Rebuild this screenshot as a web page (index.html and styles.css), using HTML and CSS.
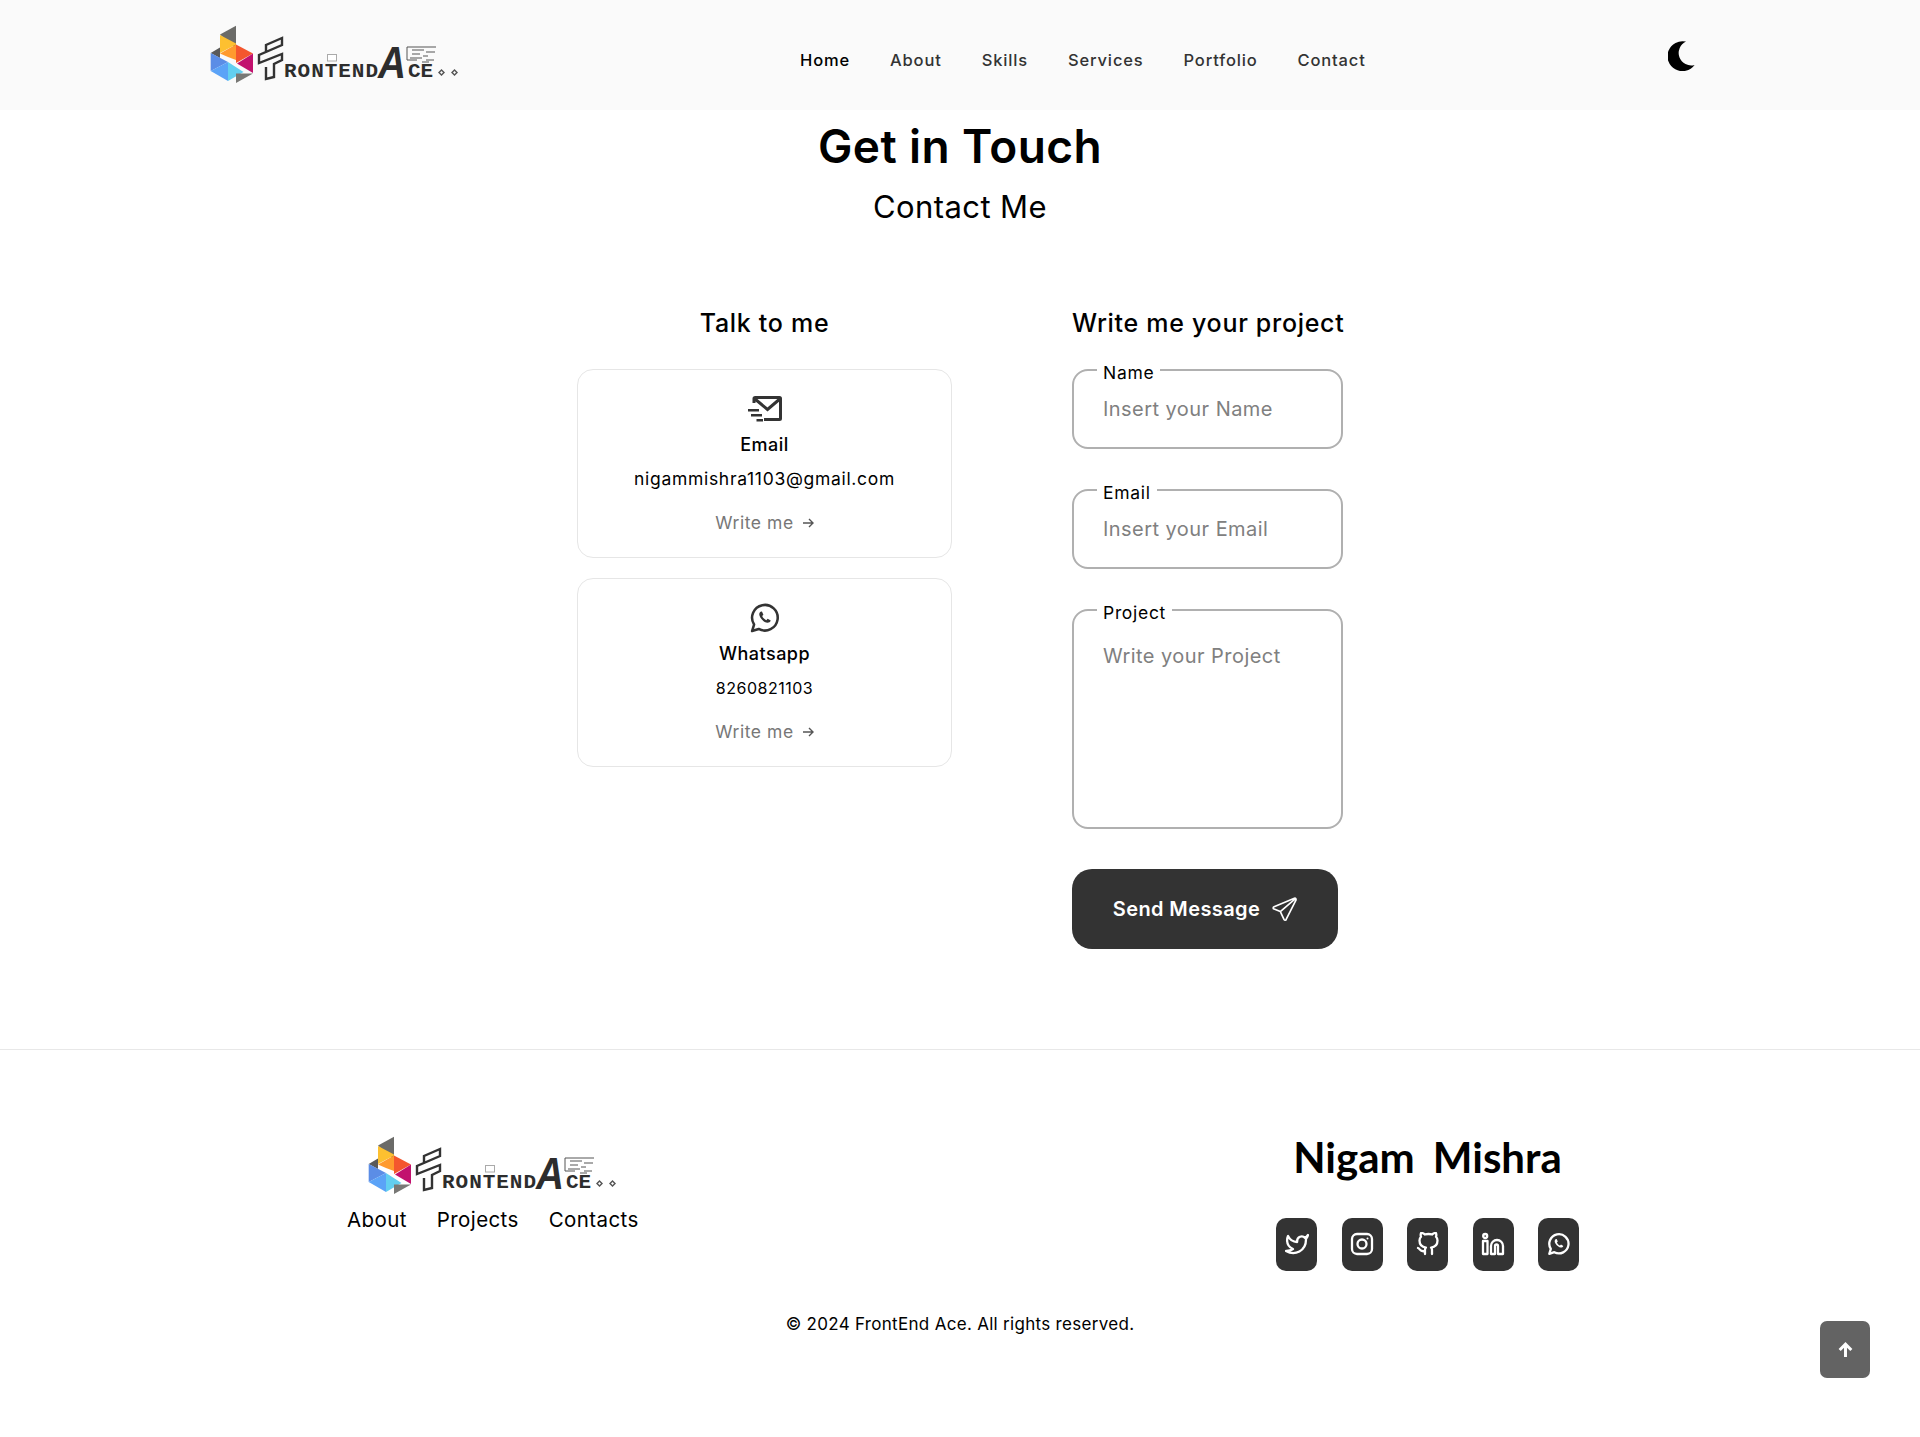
FILE: index.html
```html
<!DOCTYPE html>
<html lang="en">
<head>
<meta charset="utf-8">
<title>Contact Me</title>
<link rel="stylesheet" href="styles.css">
</head>
<body>
<svg class="defs" width="0" height="0" aria-hidden="true">
  <defs>
    <symbol id="logo" viewBox="15 12 260 66">
      <polygon points="30,24.500 46,15.700 46,39" fill="#6b6b68"/>
      <polygon points="30,25 46,33.500 46,34.500 30,43" fill="#fdc030"/>
      <polygon points="30,43.500 46,34.500 46,50 38,47" fill="#ff9a2e"/>
      <polygon points="46,34.500 63,43.500 46,53" fill="#f4562e"/>
      <polygon points="63,43.500 63,63 47,53.500" fill="#c2116e"/>
      <polygon points="20.700,43 30,37.500 30,48" fill="#5a5a5a"/>
      <polygon points="20.700,43 38,52 20.700,61" fill="#5b8de6"/>
      <polygon points="20.700,61 38,52 38,71" fill="#5ba3f7"/>
      <polygon points="38,52 53.500,62 38,71" fill="#62cff0"/>
      <polygon points="46,73 63,63.500 46,63.500" fill="#787875"/>
      <path class="logo-mark" d="M76 42V35L92 28V35L69 45V53L92 44V50L84 54V67L76 69V57"/>
      <rect class="logo-laptop" x="137.500" y="44.500" width="9" height="6.500"/>
      <text class="logo-word" x="94" y="67" textLength="94" lengthAdjust="spacing">RONTEND</text>
      <text class="logo-a" x="188" y="68.300" textLength="28" lengthAdjust="spacingAndGlyphs">A</text>
      <text class="logo-word" x="218" y="67" textLength="25" lengthAdjust="spacing">CE</text>
      <g class="logo-code">
        <path d="M217 37h29M217 37v13h10M222 40h12M236 42h9M222 44h8M233 46h5M220 48h12M236 50h8M232 52h7"/>
      </g>
      <path class="logo-dots" d="M248 62.500l3.500-3.500 3.500 3.500-3.500 3.500zM250 62.500l1.500 1.500 1.500-1.500-1.500-1.500zM261 62.500l3.500-3.500 3.500 3.500-3.500 3.500zM263 62.500l1.500 1.500 1.500-1.500-1.500-1.500z"/>
    </symbol>
  </defs>
</svg>

<header class="header">
  <a class="logo" href="#"><svg class="logo-svg" aria-label="FrontEnd Ace"><use href="#logo"/></svg></a>
  <nav class="nav">
    <a class="nav-link nav-active" href="#">Home</a>
    <a class="nav-link" href="#">About</a>
    <a class="nav-link" href="#">Skills</a>
    <a class="nav-link" href="#">Services</a>
    <a class="nav-link" href="#">Portfolio</a>
    <a class="nav-link" href="#">Contact</a>
  </nav>
  <svg class="moon" viewBox="0 0 27 30" aria-label="Dark mode"><path d="M18 .6A15 15 0 1 0 26.600 24A12.500 12.500 0 0 1 18 .6Z"/></svg>
</header>

<main class="contact">
  <h1 class="title">Get in Touch</h1>
  <p class="subtitle">Contact Me</p>
  <div class="columns">
    <section class="talk">
      <h2 class="col-title">Talk to me</h2>
      <div class="cards">
        <article class="card">
          <svg class="card-icon" width="34" height="26" viewBox="0 0 34 26" fill="none"><path d="M6 7V2.500C6 1.800 6.500 1.500 7.200 1.500H31.500C32.200 1.500 32.500 1.800 32.500 2.500V22.500C32.500 23.200 32.200 23.500 31.500 23.500H16M7 3L19.500 13.500 31.800 3" stroke="#333" stroke-width="3"/><path d="M0 14.300H11M3 19.300H14M8.500 24.300H15" stroke="#333" stroke-width="2.600"/></svg>
          <h3 class="card-title">Email</h3>
          <p class="card-value card-mail">nigammishra1103@gmail.com</p>
          <a class="card-link" href="#">Write me <svg class="arrow" viewBox="0 0 12 12" fill="none"><path d="M1 6h10M7 2l4 4-4 4"/></svg></a>
        </article>
        <article class="card">
          <svg class="card-icon" width="32" height="32" viewBox="0 0 24 24" fill="none"><path d="M2.300 21.800l1.500-4.900a9.600 9.600 0 1 1 3.500 3.300z" stroke="#333" stroke-width="1.900" stroke-linejoin="round"/><path d="M8.400 7.500c-1 1-1 2.400.2 4.300 1.300 2 3.500 3.700 5.200 3.800 1.200 0 2.200-.7 2.500-1.700l-2.300-1.300-1 1c-1.100-.3-2.600-1.700-3.100-3.100l.9-1-1-2.200c-.5-.3-1-.3-1.400.2z" fill="#333"/></svg>
          <h3 class="card-title">Whatsapp</h3>
          <p class="card-value">8260821103</p>
          <a class="card-link" href="#">Write me <svg class="arrow" viewBox="0 0 12 12" fill="none"><path d="M1 6h10M7 2l4 4-4 4"/></svg></a>
        </article>
      </div>
    </section>
    <section class="write">
      <h2 class="col-title">Write me your project</h2>
      <form class="form">
        <div class="field">
          <label class="field-label" for="name">Name</label>
          <input class="field-input" id="name" type="text" placeholder="Insert your Name">
        </div>
        <div class="field">
          <label class="field-label" for="email">Email</label>
          <input class="field-input" id="email" type="email" placeholder="Insert your Email">
        </div>
        <div class="field field-tall">
          <label class="field-label" for="project">Project</label>
          <textarea class="field-input field-area" id="project" placeholder="Write your Project"></textarea>
        </div>
        <button class="send" type="button">Send Message
          <svg class="send-icon" viewBox="0 0 24 24" fill="none"><path d="M21.500 1.200L2 9.300c-1.200.5-1.200 1.800 0 2.300L8 14l3.500 7.500c.6 1.200 1.900 1 2.200-.2L23 3c.3-1.300-.4-2.200-1.500-1.800zM8 14L22.500 1.600"/></svg>
        </button>
      </form>
    </section>
  </div>
</main>

<footer class="footer">
  <div class="footer-row">
    <div class="footer-brand">
      <svg class="logo-svg" aria-label="FrontEnd Ace"><use href="#logo"/></svg>
      <ul class="footer-links">
        <li><a class="footer-link" href="#">About</a></li>
        <li><a class="footer-link" href="#">Projects</a></li>
        <li><a class="footer-link" href="#">Contacts</a></li>
      </ul>
    </div>
    <div class="footer-social">
      <div class="signature">Nigam Mishra</div>
      <div class="socials">
        <a class="social" href="#"><svg class="social-icon" viewBox="0 0 24 24"><path d="M23 3a10.900 10.900 0 0 1-3 3 4.480 4.480 0 0 0-7.860 3v1A10.660 10.660 0 0 1 3 4s-4 9 5 13a11.640 11.640 0 0 1-7 2c9 5 20 0 20-11.500a4.500 4.500 0 0 0-.08-.83A7.720 7.720 0 0 0 23 3z"/></svg></a>
        <a class="social" href="#"><svg class="social-icon" viewBox="0 0 24 24"><rect x="2" y="2" width="20" height="20" rx="5"/><circle cx="12" cy="12" r="4.500"/><circle class="social-dot" cx="17.500" cy="6.500" r="1"/></svg></a>
        <a class="social" href="#"><svg class="social-icon" viewBox="0 0 24 24"><path d="M9 19c-5 1.500-5-2.500-7-3m14 6v-3.870a3.370 3.370 0 0 0-.94-2.610c3.140-.35 6.440-1.540 6.440-7A5.440 5.440 0 0 0 20 4.770 5.070 5.070 0 0 0 19.910 1S18.730.65 16 2.480a13.380 13.380 0 0 0-7 0C6.270.65 5.090 1 5.090 1A5.070 5.070 0 0 0 5 4.770a5.440 5.440 0 0 0-1.500 3.750c0 5.420 3.300 6.610 6.440 7A3.370 3.370 0 0 0 9 18.130V22"/></svg></a>
        <a class="social" href="#"><svg class="social-icon" viewBox="0 0 24 24"><path d="M16 8a6 6 0 0 1 6 6v8h-5v-8a1.500 1.500 0 0 0-3 0v8h-4v-8a6 6 0 0 1 6-6z"/><rect x="2" y="9" width="4.500" height="13"/><circle cx="4.200" cy="4" r="2"/></svg></a>
        <a class="social" href="#"><svg class="social-icon" viewBox="0 0 24 24"><path d="M2.300 21.800l1.500-4.900a9.600 9.600 0 1 1 3.500 3.300z"/><path class="social-fill" d="M8.400 7.500c-1 1-1 2.400.2 4.300 1.300 2 3.500 3.700 5.200 3.800 1.200 0 2.200-.7 2.500-1.700l-2.300-1.300-1 1c-1.100-.3-2.600-1.700-3.100-3.100l.9-1-1-2.200c-.5-.3-1-.3-1.400.2z"/></svg></a>
      </div>
    </div>
  </div>
  <p class="copyright">© 2024 FrontEnd Ace. All rights reserved.</p>
</footer>

<a class="scroll-top" href="#"><svg class="scroll-icon" viewBox="0 0 16 16"><path d="M8 15V3M2.500 8.500L8 3l5.500 5.500"/></svg></a>
</body>
</html>
```
FILE: styles.css
```css
* { box-sizing: border-box; }
html, body { margin: 0; padding: 0; }
body {
  background: #fff;
  color: #000;
  font-family: Inter, "Open Sans", sans-serif;
  font-size: 16px;
  min-height: 1437px;
}
a { color: inherit; text-decoration: none; }
.defs { position: absolute; }

.logo-svg { display: block; width: 260px; height: 66px; }
.logo-mark { fill: none; stroke: #333; stroke-width: 2.4; }
.logo-laptop { fill: #fff; stroke: #aaa; stroke-width: 1; }
.logo-word { font-family: "Liberation Mono", monospace; font-weight: 700; font-size: 21px; fill: #2d2d2d; }
.logo-a { font-family: "Liberation Sans", sans-serif; font-weight: 700; font-style: italic; font-size: 45px; fill: #2d2d2d; }
.logo-code { fill: none; stroke: #555; stroke-width: 1; }
.logo-dots { fill: #555; fill-rule: evenodd; }

.header {
  display: grid;
  grid-template-columns: 595px auto 1fr;
  align-items: center;
  height: 110px;
  padding: 0 225px 0 205px;
  background: #fafafa;
}
.nav { display: flex; gap: 40px; padding-top: 10px; }
.nav-link { color: #333; font-weight: 500; font-size: 16.5px; line-height: 24px; letter-spacing: .85px; }
.nav-active { color: #000; }
.moon { justify-self: end; width: 27px; height: 30px; fill: #000; margin-top: 2px; }

.contact { display: flex; flex-direction: column; align-items: center; }
.title { margin: 0; font-size: 46px; line-height: 72px; font-weight: 600; letter-spacing: .4px; }
.subtitle { margin: 0; font-size: 31px; line-height: 48px; padding-top: 1px; letter-spacing: .4px; }
.columns { display: grid; grid-template-columns: 375px 271px; gap: 120px; margin-top: 73px; }
.col-title { margin: 0 0 26px; font-size: 25px; line-height: 39px; font-weight: 500; letter-spacing: .7px; white-space: nowrap; }
.talk .col-title { text-align: center; }

.cards { display: flex; flex-direction: column; gap: 20px; }
.card {
  display: flex;
  flex-direction: column;
  align-items: center;
  padding: 23px 0 22px;
  border: 1px solid #e6e6e6;
  border-radius: 16px;
}
.card-icon { display: block; height: 32px; }
.card-title { margin: 8px 0 0; font-size: 18px; line-height: 24px; font-weight: 500; letter-spacing: .5px; }
.card-value { margin: 10px 0 0; font-size: 16px; line-height: 24px; letter-spacing: .5px; }
.card-mail { font-size: 17.5px; letter-spacing: .7px; }
.card-link { display: flex; align-items: center; gap: 8px; margin-top: 20px; color: #777; font-size: 17.5px; line-height: 24px; letter-spacing: .55px; }
.arrow { width: 12px; height: 12px; stroke: #555; stroke-width: 1.4; }

.form { display: flex; flex-direction: column; gap: 40px; }
.field { position: relative; height: 80px; }
.field-tall { height: 220px; }
.field-label {
  position: absolute;
  top: -5px;
  left: 25px;
  padding: 0 6px;
  background: #fff;
  font-size: 17.5px;
  line-height: 18px;
  letter-spacing: .7px;
}
.field-input {
  display: block;
  width: 100%;
  height: 100%;
  padding: 0 29px;
  border: 2px solid #b0b0b0;
  border-radius: 16px;
  background: #fff;
  color: #000;
  font-family: inherit;
  font-size: 20px;
  letter-spacing: .45px;
  outline: none;
  resize: none;
}
.field-area { padding-top: 33px; }
.field-input::placeholder { color: #808080; opacity: 1; }

.send {
  display: flex;
  align-items: center;
  justify-content: center;
  gap: 12px;
  width: 266px;
  height: 80px;
  border: 0;
  border-radius: 20px;
  background: #333;
  color: #fff;
  font-family: inherit;
  font-size: 20px;
  font-weight: 600;
  letter-spacing: .4px;
}
.send-icon { width: 25px; height: 25px; stroke: #fff; stroke-width: 1.6; stroke-linejoin: round; }

.footer { margin-top: 100px; border-top: 1px solid #e8e8e8; }
.footer-row { display: flex; justify-content: space-between; padding: 83px 341px 0 347px; }
.footer-brand { display: flex; flex-direction: column; align-items: center; }
.footer-links { display: flex; gap: 30px; margin: 9px 0 0; padding: 0; list-style: none; }
.footer-link { font-size: 20.5px; line-height: 24px; display: block; letter-spacing: .4px; }
.footer-social { display: flex; flex-direction: column; align-items: center; }
.signature {
  font-family: Lato, sans-serif;
  font-size: 42px;
  font-weight: 700;
  line-height: 48px;
  word-spacing: 8px;
}
.socials { display: flex; gap: 24.5px; margin-top: 37px; }
.social {
  display: flex;
  align-items: center;
  justify-content: center;
  width: 41px;
  height: 53px;
  padding-bottom: 2px;
  border-radius: 10px;
  background: #333;
}
.social-icon { width: 24px; height: 24px; fill: none; stroke: #fff; stroke-width: 2.3; stroke-linejoin: round; stroke-linecap: round; }
.social-dot, .social-fill { fill: #fff; stroke: none; }

.copyright { margin: 41px 0 0; text-align: center; font-size: 17px; line-height: 24px; letter-spacing: .3px; }

.scroll-top {
  position: fixed;
  right: 50px;
  bottom: 59px;
  display: flex;
  align-items: center;
  justify-content: center;
  width: 50px;
  height: 57px;
  border-radius: 7px;
  background: #636363;
}
.scroll-icon { width: 17px; height: 17px; fill: none; stroke: #fff; stroke-width: 2.8; }
```
